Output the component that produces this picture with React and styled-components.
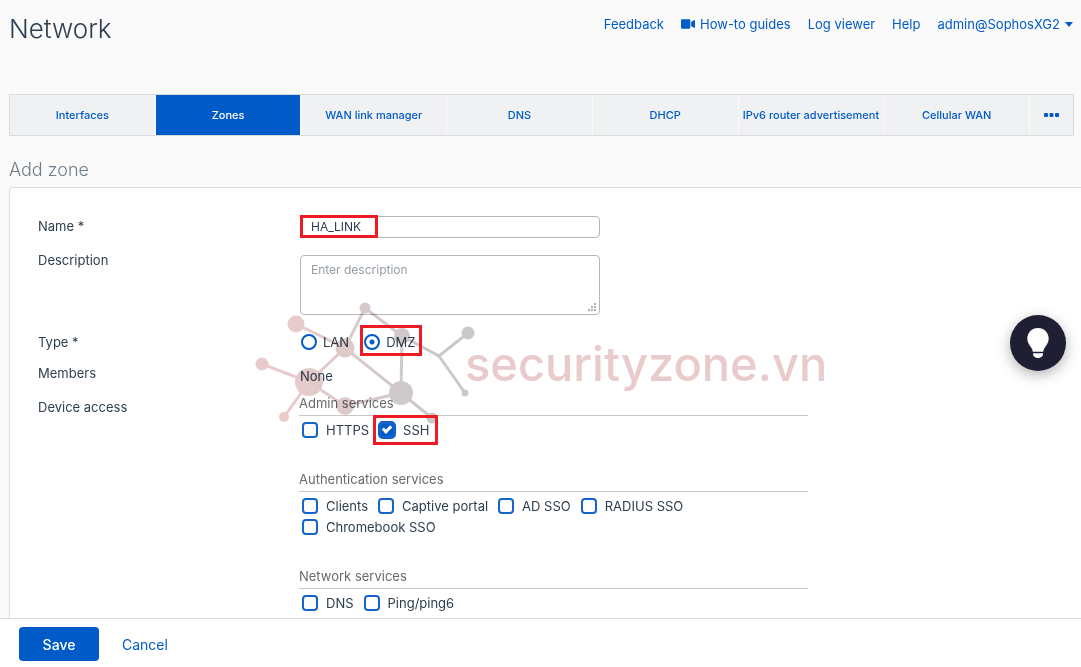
import { useState } from "react";
import styled, { createGlobalStyle } from "styled-components";
import { FaVideo } from "react-icons/fa";

const tabs = ["Interfaces", "Zones", "WAN link manager", "DNS", "DHCP", "IPv6 router advertisement", "Cellular WAN"];

const serviceGroups = [
    { title: "Admin services", items: ["HTTPS", "SSH"] },
    { title: "Authentication services", items: ["Clients", "Captive portal", "AD SSO", "RADIUS SSO", "Chromebook SSO"] },
    { title: "Network services", items: ["DNS", "Ping/ping6"] },
];

const Watermark = () => (
    <SWatermark width="600" height="130" viewBox="250 300 600 130" aria-hidden="true">
        <defs>
            <linearGradient id="fade" gradientUnits="userSpaceOnUse" x1="290" y1="0" x2="430" y2="0">
                <stop offset="0" stopColor="#e9cbcc" />
                <stop offset="1" stopColor="#c9c9c9" />
            </linearGradient>
        </defs>
        <g stroke="url(#fade)" strokeWidth="3" fill="none">
            <path d="M296 324L345 348L365 308L402 336L439 356L468 333M439 356L465 393" />
            <path d="M262 364L309 382L345 348L401 393L402 336M284 417L309 382L345 406L401 393L432 418" />
        </g>
        <g fill="url(#fade)">
            <circle cx="365" cy="308" r="5.500" />
            <circle cx="296" cy="324" r="8.500" />
            <circle cx="345" cy="348" r="9.500" />
            <circle cx="402" cy="336" r="8" />
            <circle cx="468" cy="333" r="6.500" />
            <circle cx="262" cy="364" r="6.500" />
            <circle cx="309" cy="382" r="14" />
            <circle cx="284" cy="417" r="5" />
            <circle cx="345" cy="406" r="9" />
            <circle cx="401" cy="393" r="12" />
            <circle cx="432" cy="418" r="5.500" />
            <circle cx="439" cy="356" r="2" />
            <circle cx="465" cy="393" r="3.500" />
        </g>
        <SBrand x="465" y="381">securityzone.vn</SBrand>
    </SWatermark>
);

const Header = () => (
    <SHeader>
        <STitle>Network</STitle>
        <SNav>
            <SNavLink href="#feedback">Feedback</SNavLink>
            <SNavLink href="#guides"><FaVideo size={14} />How-to guides</SNavLink>
            <SNavLink href="#log">Log viewer</SNavLink>
            <SNavLink href="#help">Help</SNavLink>
            <SNavLink href="#account">
                admin@SophosXG2
                <svg width="8" height="5" viewBox="0 0 8 5"><path d="M0 0h8L4 5z" fill="currentColor" /></svg>
            </SNavLink>
        </SNav>
    </SHeader>
);

const ServiceGroup = ({ title, items, checked, onToggle }) => (
    <SGroup>
        <SLegend>{title}</SLegend>
        <SChecks>
            {items.map((item) => (
                <SCheckLabel key={item}>
                    <SCheckbox type="checkbox" checked={checked.includes(item)} onChange={() => onToggle(item)} />
                    {item}
                    {item === "SSH" && <SMarker $inset="-4px -9px -5px -6px" />}
                </SCheckLabel>
            ))}
        </SChecks>
    </SGroup>
);

const App = () => {
    const [active, setActive] = useState("Zones");
    const [name, setName] = useState("HA_LINK");
    const [type, setType] = useState("DMZ");
    const [checked, setChecked] = useState(["SSH"]);

    const onToggle = (item) => {
        setChecked(checked.includes(item) ? checked.filter((c) => c !== item) : [...checked, item]);
    };

    return (
        <SPage>
            <GlobalStyle />
            <SMain>
                <Header />
                <STabs>
                    {tabs.map((tab) => (
                        <STab key={tab} type="button" $active={tab === active} onClick={() => setActive(tab)}>{tab}</STab>
                    ))}
                    <SMore type="button" aria-label="More tabs">
                        <svg width="15" height="4" viewBox="0 0 15 4" fill="currentColor">
                            <rect width="4" height="4" rx="1" />
                            <rect x="5.500" width="4" height="4" rx="1" />
                            <rect x="11" width="4" height="4" rx="1" />
                        </svg>
                    </SMore>
                </STabs>
                <SSubtitle>Add zone</SSubtitle>
                <SPanel>
                    <SRow $gap={12}>
                        <SLabel as="label" htmlFor="name">Name *</SLabel>
                        <SInputWrap>
                            <SInput id="name" value={name} onChange={(e) => setName(e.target.value)} />
                            <SMarker $inset="-1px 222px 0 0" />
                        </SInputWrap>
                    </SRow>
                    <SRow $gap={17}>
                        <SLabel as="label" htmlFor="description">Description</SLabel>
                        <SInputWrap $top={5}>
                            <STextarea id="description" placeholder="Enter description" />
                            <SGrip width="8" height="8" viewBox="0 0 8 8" fill="#b0b0b0">
                                <path d="M6 0h2v2H6zM3 3h2v2H3zM6 3h2v2H6zM0 6h2v2H0zM3 6h2v2H3zM6 6h2v2H6z" />
                            </SGrip>
                        </SInputWrap>
                    </SRow>
                    <SRow $gap={11}>
                        <SLabel>Type *</SLabel>
                        <SRadios>
                            {["LAN", "DMZ"].map((t) => (
                                <SRadioLabel key={t}>
                                    <SRadio type="radio" name="type" checked={type === t} onChange={() => setType(t)} />
                                    {t}
                                    {t === "DMZ" && <SMarker $inset="-7px -7px -4px -4px" />}
                                </SRadioLabel>
                            ))}
                        </SRadios>
                    </SRow>
                    <SRow $gap={11}>
                        <SLabel>Members</SLabel>
                        <SValue>None</SValue>
                    </SRow>
                    <SRow $gap={0}>
                        <SLabel>Device access</SLabel>
                        <SGroups>
                            {serviceGroups.map((group) => (
                                <ServiceGroup key={group.title} {...group} checked={checked} onToggle={onToggle} />
                            ))}
                        </SGroups>
                    </SRow>
                    <Watermark />
                </SPanel>
            </SMain>
            <SFooter>
                <SSave type="button">Save</SSave>
                <SCancel href="#cancel">Cancel</SCancel>
            </SFooter>
            <SHelp type="button" aria-label="Tips">
                <svg width="22" height="30" viewBox="0 0 22 30" fill="#fff">
                    <path d="M11 0C4.900 0 .3 4.700.3 10.500c0 3.600 1.700 6 3.300 8.200 1.200 1.700 1.900 2.900 2.200 5.100h10.400c.3-2.200 1-3.400 2.200-5.100 1.600-2.200 3.300-4.600 3.300-8.200C21.700 4.700 17.100 0 11 0z" />
                    <path d="M6 25.200h10v.8c0 2.200-2.200 4-5 4s-5-1.800-5-4z" />
                </svg>
            </SHelp>
        </SPage>
    );
};

export default App;

const GlobalStyle = createGlobalStyle`
    * {
        box-sizing: border-box;
    }
    body {
        margin: 0;
        background-color: #fafafa;
        color: #2d3e4e;
        font-family: Inter, "Liberation Sans", sans-serif;
        font-size: 13px;
    }
    button, input, textarea {
        font-family: inherit;
        color: inherit;
    }
`;
const SPage = styled.div`
    height: 100vh;
    display: flex;
    flex-direction: column;
`;
const SMain = styled.main`
    flex: 1;
    min-height: 0;
    overflow: auto;
    display: flex;
    flex-direction: column;
    padding-left: 9px;
`;
const SHeader = styled.header`
    display: flex;
    justify-content: space-between;
    padding: 12px 8px 0 0;
    margin-bottom: 48px;
`;
const STitle = styled.h1`
    margin: 0;
    font-size: 26px;
    font-weight: 300;
    line-height: 34px;
`;
const SNav = styled.nav`
    display: flex;
    gap: 17px;
`;
const SNavLink = styled.a`
    display: flex;
    align-items: center;
    gap: 5px;
    height: 24px;
    color: #005bc8;
    text-decoration: none;
`;
const STabs = styled.div`
    display: flex;
    flex-shrink: 0;
    height: 42px;
    margin-right: 7px;
    border: 1px solid #dadbdc;
    background-color: #f0f1f3;
`;
const STab = styled.button`
    flex: 1 1 0;
    min-width: 0;
    padding: 0;
    border: 0;
    border-right: 1px solid #fafafa;
    background-color: ${({ $active }) => ($active ? "#005bc8" : "transparent")};
    color: ${({ $active }) => ($active ? "#fff" : "#005bc8")};
    font-size: 11px;
    font-weight: 500;
    white-space: nowrap;
    cursor: pointer;
`;
const SMore = styled.button`
    display: flex;
    align-items: center;
    justify-content: center;
    width: 43px;
    padding: 0;
    border: 0;
    background-color: transparent;
    color: #005bc8;
`;
const SSubtitle = styled.h2`
    margin: 22px 0 5px;
    font-size: 18px;
    font-weight: 300;
    line-height: 24px;
    color: #6f7c88;
`;
const SPanel = styled.form`
    position: relative;
    flex: 1;
    padding: 28px 28px 0;
    border: 1px solid #d9dadb;
    border-width: 1px 0 0 1px;
    border-top-left-radius: 4px;
    background-color: #fff;
`;
const SRow = styled.div`
    display: grid;
    grid-template-columns: 262px 1fr;
    margin-bottom: ${({ $gap }) => $gap}px;
`;
const SLabel = styled.span`
    line-height: 20px;
`;
const SInputWrap = styled.div`
    position: relative;
    width: 300px;
    margin-top: ${({ $top }) => $top || 0}px;
`;
const SInput = styled.input`
    display: block;
    width: 100%;
    height: 22px;
    padding: 0 10px 1px;
    border: 1px solid #b0b7be;
    border-radius: 4px;
    font-size: 12px;
`;
const STextarea = styled.textarea`
    display: block;
    width: 100%;
    height: 60px;
    padding: 6px 10px;
    border: 1px solid #b0b7be;
    border-radius: 4px;
    font-size: 12px;
    line-height: 16px;
    resize: none;
    &::placeholder {
        color: #959da5;
    }
`;
const SGrip = styled.svg`
    position: absolute;
    right: 4px;
    bottom: 4px;
`;
const SMarker = styled.span`
    position: absolute;
    inset: ${({ $inset }) => $inset};
    z-index: 2;
    border: 3px solid #ed1c24;
    pointer-events: none;
`;
const SRadios = styled.div`
    display: flex;
    gap: 15px;
    padding-left: 1px;
`;
const SRadioLabel = styled.label`
    position: relative;
    display: flex;
    align-items: center;
    gap: 6px;
    height: 20px;
`;
const SRadio = styled.input`
    appearance: none;
    width: 16px;
    height: 16px;
    margin: 0;
    border: 2px solid #005bc8;
    border-radius: 50%;
    background-color: #fff;
    &:checked {
        background-image: radial-gradient(circle, #005bc8 2px, #fff 3px);
    }
`;
const SValue = styled.div`
    padding-top: 3px;
    line-height: 20px;
`;
const SGroups = styled.div`
    display: flex;
    flex-direction: column;
    gap: 32px;
    max-width: 509px;
    margin-left: -1px;
`;
const SGroup = styled.section`
    display: flex;
    flex-direction: column;
`;
const SLegend = styled.h3`
    margin: 0;
    padding-bottom: 6px;
    border-bottom: 1px solid #c8c8c8;
    font-size: 13px;
    font-weight: 400;
    line-height: 12px;
    color: #6a6a6a;
`;
const SChecks = styled.div`
    display: flex;
    flex-wrap: wrap;
    column-gap: 10px;
    padding: 3px 0 1px 3px;
`;
const SCheckLabel = styled.label`
    position: relative;
    display: flex;
    align-items: center;
    gap: 8px;
    height: 21px;
`;
const SCheckbox = styled.input`
    appearance: none;
    width: 16px;
    height: 16px;
    margin: 0;
    border: 2px solid #1464cb;
    border-radius: 4px;
    background-color: #fff;
    &:checked {
        position: relative;
        background-color: #005bc8;
        box-shadow: 0 0 0 1px #005bc8;
    }
    &:checked::after {
        content: "";
        position: absolute;
        left: 3px;
        top: 0;
        width: 3px;
        height: 6px;
        border: solid #fff;
        border-width: 0 3px 3px 0;
        transform: rotate(45deg);
    }
`;
const SWatermark = styled.svg`
    position: absolute;
    left: 240px;
    top: 112px;
    z-index: 1;
    mix-blend-mode: multiply;
    pointer-events: none;
`;
const SBrand = styled.text`
    font-size: 47px;
    font-weight: 500;
    fill: #e9cbcc;
`;
const SFooter = styled.footer`
    display: flex;
    align-items: center;
    gap: 23px;
    height: 49px;
    padding: 2px 19px 0;
    border-top: 1px solid #d9dadb;
    background-color: #fff;
    font-size: 14px;
`;
const SSave = styled.button`
    width: 80px;
    height: 34px;
    border: 0;
    border-radius: 4px;
    background-color: #005bc8;
    color: #fff;
    font-size: 14px;
    font-weight: 500;
`;
const SCancel = styled.a`
    color: #005bc8;
    text-decoration: none;
`;
const SHelp = styled.button`
    position: fixed;
    right: 15px;
    top: calc(50% - 19px);
    z-index: 3;
    display: flex;
    align-items: center;
    justify-content: center;
    width: 56px;
    height: 56px;
    padding: 0;
    border: 0;
    border-radius: 50%;
    background-color: #1f1f33;
    box-shadow: 0 4px 14px rgba(0, 0, 0, .3);
`;
